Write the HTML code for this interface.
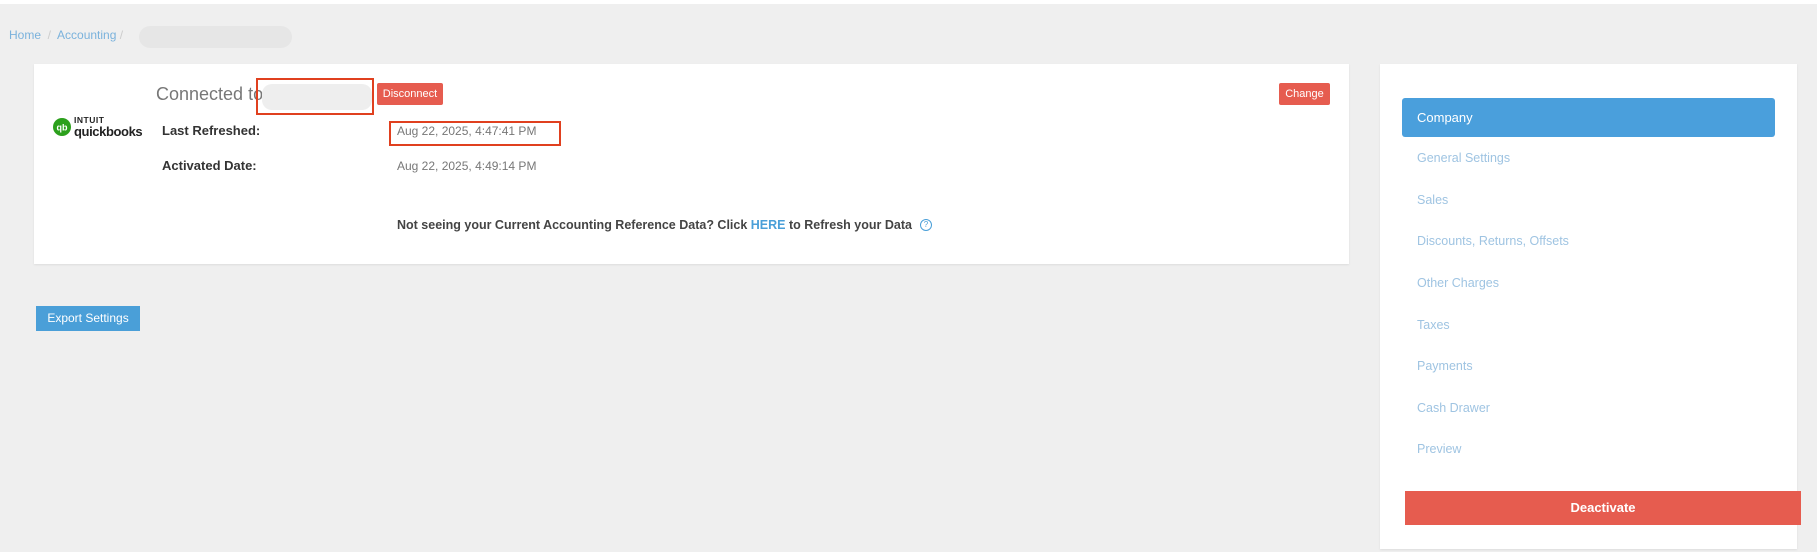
<!DOCTYPE html>
<html><head><meta charset="utf-8"><style>
*{margin:0;padding:0;box-sizing:border-box}
body{width:1817px;height:552px;background:#efefef;font-family:"Liberation Sans",sans-serif;position:relative;overflow:hidden}
.a{position:absolute;white-space:nowrap}
.topline{position:absolute;left:0;top:0;width:1817px;height:4px;background:#fff}
.card{position:absolute;left:34px;top:64px;width:1315px;height:200px;background:#fff;box-shadow:0 1px 2px rgba(0,0,0,.08)}
.side{position:absolute;left:1380px;top:64px;width:417px;height:485px;background:#fff;box-shadow:0 1px 2px rgba(0,0,0,.08)}
.btnr{background:#e65c4f;color:#fff;font-size:11px;text-align:center;border-radius:2px}
.lbl{font-size:13px;font-weight:bold;color:#333}
.val{font-size:12px;color:#777}
.mi{font-size:12.5px;color:#9fc4e2;left:1417px}
</style></head><body>
<div class="topline"></div>
<div class="a" style="left:9px;top:28px;font-size:12px;color:#7ab2dc">Home <span style="color:#ccc">&nbsp;/&nbsp;</span> Accounting <span style="color:#ccc">/</span></div>
<div class="a" style="left:139px;top:26px;width:153px;height:22px;background:#e6e6e6;border-radius:11px"></div>
<div class="card"></div>
<svg class="a" style="left:53px;top:118px" width="18" height="18" viewBox="0 0 16 16"><circle cx="8" cy="8" r="8" fill="#2ca01c"/><text x="8" y="11" font-size="8" font-weight="bold" fill="#fff" text-anchor="middle" font-family="Liberation Sans">qb</text></svg>
<div class="a" style="left:74px;top:115px;font-size:8.5px;font-weight:bold;color:#222;letter-spacing:.5px">INTUIT</div>
<div class="a" style="left:74px;top:124px;font-size:13px;font-weight:bold;color:#222;letter-spacing:-.4px">quickbooks</div>
<div class="a" style="left:156px;top:84px;font-size:18px;color:#777">Connected to</div>
<div class="a" style="left:262px;top:84px;width:110px;height:26px;background:#eee;border-radius:10px"></div>
<div class="a" style="left:256px;top:78px;width:118px;height:37px;border:2px solid #e0401f"></div>
<div class="a btnr" style="left:377px;top:83px;width:66px;height:22px;line-height:22px">Disconnect</div>
<div class="a btnr" style="left:1279px;top:83px;width:51px;height:22px;line-height:22px">Change</div>
<div class="a lbl" style="left:162px;top:123px">Last Refreshed:</div>
<div class="a lbl" style="left:162px;top:158px">Activated Date:</div>
<div class="a val" style="left:397px;top:124px">Aug 22, 2025, 4:47:41 PM</div>
<div class="a" style="left:389px;top:121px;width:172px;height:25px;border:2px solid #e0401f"></div>
<div class="a val" style="left:397px;top:159px">Aug 22, 2025, 4:49:14 PM</div>
<div class="a" style="left:397px;top:218px;font-size:12.5px;font-weight:bold;color:#444">Not seeing your Current Accounting Reference Data? Click <span style="color:#4a9fd8">HERE</span> to Refresh your Data</div>
<div class="a" style="left:920px;top:219px;width:12px;height:12px;border:1px solid #4a9fd8;border-radius:50%;font-size:8px;color:#4a9fd8;text-align:center;line-height:10px">?</div>
<div class="a" style="left:36px;top:306px;width:104px;height:25px;background:#4a9fd8;color:#fff;font-size:12px;line-height:25px;text-align:center">Export Settings</div>
<div class="side"></div>
<div class="a" style="left:1402px;top:98px;width:373px;height:39px;background:#4a9fdc;border-radius:3px;color:#fff;font-size:13px;line-height:39px;padding-left:15px">Company</div>
<div class="a mi" style="top:151px">General Settings</div>
<div class="a mi" style="top:193px">Sales</div>
<div class="a mi" style="top:234px">Discounts, Returns, Offsets</div>
<div class="a mi" style="top:276px">Other Charges</div>
<div class="a mi" style="top:318px">Taxes</div>
<div class="a mi" style="top:359px">Payments</div>
<div class="a mi" style="top:401px">Cash Drawer</div>
<div class="a mi" style="top:442px">Preview</div>
<div class="a" style="left:1405px;top:491px;width:396px;height:34px;background:#e65c4f;color:#fff;font-size:13px;font-weight:bold;line-height:34px;text-align:center">Deactivate</div>
</body></html>
